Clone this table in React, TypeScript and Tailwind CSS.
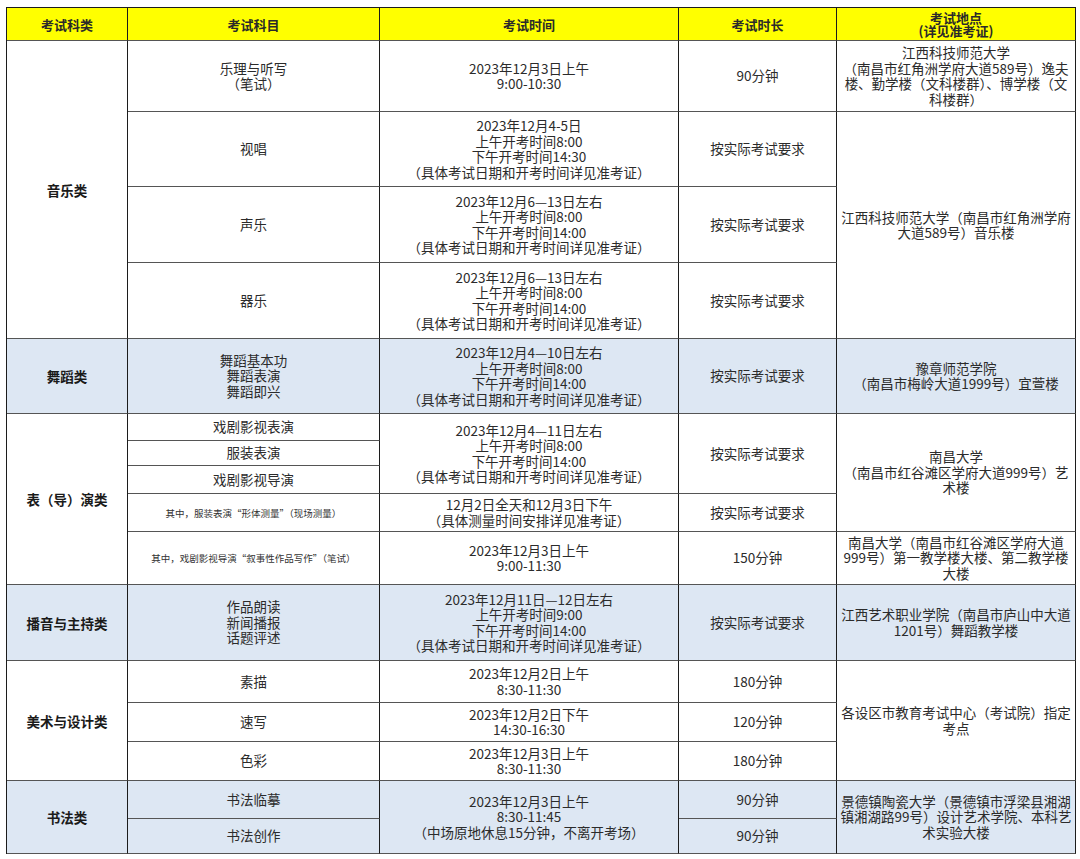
import React from 'react'

type Cell = {
    pos: string
    lines: string[]
    kind?: 'head' | 'cat' | 'small'
    shade?: boolean
}

const WAIT = '按实际考试要求'
const NOTE = '（具体考试日期和开考时间详见准考证）'

const cells: Cell[] = [
    // header
    { pos: 'col-start-1 row-start-1', lines: ['考试科类'], kind: 'head' },
    { pos: 'col-start-2 row-start-1', lines: ['考试科目'], kind: 'head' },
    { pos: 'col-start-3 row-start-1', lines: ['考试时间'], kind: 'head' },
    { pos: 'col-start-4 row-start-1', lines: ['考试时长'], kind: 'head' },
    { pos: 'col-start-5 row-start-1', lines: ['考试地点', '(详见准考证)'], kind: 'head' },

    // 音乐类
    { pos: 'col-start-1 row-start-2 row-span-4', lines: ['音乐类'], kind: 'cat' },
    { pos: 'col-start-2 row-start-2', lines: ['乐理与听写', '（笔试）'] },
    { pos: 'col-start-3 row-start-2', lines: ['2023年12月3日上午', '9:00-10:30'] },
    { pos: 'col-start-4 row-start-2', lines: ['90分钟'] },
    { pos: 'col-start-5 row-start-2', lines: ['江西科技师范大学', '（南昌市红角洲学府大道589号）逸夫', '楼、勤学楼（文科楼群）、博学楼（文', '科楼群）'] },
    { pos: 'col-start-2 row-start-3', lines: ['视唱'] },
    { pos: 'col-start-3 row-start-3', lines: ['2023年12月4-5日', '上午开考时间8:00', '下午开考时间14:30', NOTE] },
    { pos: 'col-start-4 row-start-3', lines: [WAIT] },
    { pos: 'col-start-5 row-start-3 row-span-3', lines: ['江西科技师范大学（南昌市红角洲学府', '大道589号）音乐楼'] },
    { pos: 'col-start-2 row-start-4', lines: ['声乐'] },
    { pos: 'col-start-3 row-start-4', lines: ['2023年12月6—13日左右', '上午开考时间8:00', '下午开考时间14:00', NOTE] },
    { pos: 'col-start-4 row-start-4', lines: [WAIT] },
    { pos: 'col-start-2 row-start-5', lines: ['器乐'] },
    { pos: 'col-start-3 row-start-5', lines: ['2023年12月6—13日左右', '上午开考时间8:00', '下午开考时间14:00', NOTE] },
    { pos: 'col-start-4 row-start-5', lines: [WAIT] },

    // 舞蹈类
    { pos: 'col-start-1 row-start-6', lines: ['舞蹈类'], kind: 'cat', shade: true },
    { pos: 'col-start-2 row-start-6', lines: ['舞蹈基本功', '舞蹈表演', '舞蹈即兴'], shade: true },
    { pos: 'col-start-3 row-start-6', lines: ['2023年12月4—10日左右', '上午开考时间8:00', '下午开考时间14:00', NOTE], shade: true },
    { pos: 'col-start-4 row-start-6', lines: [WAIT], shade: true },
    { pos: 'col-start-5 row-start-6', lines: ['豫章师范学院', '（南昌市梅岭大道1999号）宜萱楼'], shade: true },

    // 表（导）演类
    { pos: 'col-start-1 row-start-7 row-span-5', lines: ['表（导）演类'], kind: 'cat' },
    { pos: 'col-start-2 row-start-7', lines: ['戏剧影视表演'] },
    { pos: 'col-start-2 row-start-8', lines: ['服装表演'] },
    { pos: 'col-start-2 row-start-9', lines: ['戏剧影视导演'] },
    { pos: 'col-start-3 row-start-7 row-span-3', lines: ['2023年12月4—11日左右', '上午开考时间8:00', '下午开考时间14:00', NOTE] },
    { pos: 'col-start-4 row-start-7 row-span-3', lines: [WAIT] },
    { pos: 'col-start-5 row-start-7 row-span-4', lines: ['南昌大学', '（南昌市红谷滩区学府大道999号）艺', '术楼'] },
    { pos: 'col-start-2 row-start-10', lines: ['其中，服装表演“形体测量”（现场测量）'], kind: 'small' },
    { pos: 'col-start-3 row-start-10', lines: ['12月2日全天和12月3日下午', '（具体测量时间安排详见准考证）'] },
    { pos: 'col-start-4 row-start-10', lines: [WAIT] },
    { pos: 'col-start-2 row-start-11', lines: ['其中，戏剧影视导演“叙事性作品写作”（笔试）'], kind: 'small' },
    { pos: 'col-start-3 row-start-11', lines: ['2023年12月3日上午', '9:00-11:30'] },
    { pos: 'col-start-4 row-start-11', lines: ['150分钟'] },
    { pos: 'col-start-5 row-start-11', lines: ['南昌大学（南昌市红谷滩区学府大道', '999号）第一教学楼大楼、第二教学楼', '大楼'] },

    // 播音与主持类
    { pos: 'col-start-1 row-start-12', lines: ['播音与主持类'], kind: 'cat', shade: true },
    { pos: 'col-start-2 row-start-12', lines: ['作品朗读', '新闻播报', '话题评述'], shade: true },
    { pos: 'col-start-3 row-start-12', lines: ['2023年12月11日—12日左右', '上午开考时间9:00', '下午开考时间14:00', NOTE], shade: true },
    { pos: 'col-start-4 row-start-12', lines: [WAIT], shade: true },
    { pos: 'col-start-5 row-start-12', lines: ['江西艺术职业学院（南昌市庐山中大道', '1201号）舞蹈教学楼'], shade: true },

    // 美术与设计类
    { pos: 'col-start-1 row-start-13 row-span-3', lines: ['美术与设计类'], kind: 'cat' },
    { pos: 'col-start-2 row-start-13', lines: ['素描'] },
    { pos: 'col-start-3 row-start-13', lines: ['2023年12月2日上午', '8:30-11:30'] },
    { pos: 'col-start-4 row-start-13', lines: ['180分钟'] },
    { pos: 'col-start-2 row-start-14', lines: ['速写'] },
    { pos: 'col-start-3 row-start-14', lines: ['2023年12月2日下午', '14:30-16:30'] },
    { pos: 'col-start-4 row-start-14', lines: ['120分钟'] },
    { pos: 'col-start-2 row-start-15', lines: ['色彩'] },
    { pos: 'col-start-3 row-start-15', lines: ['2023年12月3日上午', '8:30-11:30'] },
    { pos: 'col-start-4 row-start-15', lines: ['180分钟'] },
    { pos: 'col-start-5 row-start-13 row-span-3', lines: ['各设区市教育考试中心（考试院）指定', '考点'] },

    // 书法类
    { pos: 'col-start-1 row-start-16 row-span-2', lines: ['书法类'], kind: 'cat', shade: true },
    { pos: 'col-start-2 row-start-16', lines: ['书法临摹'], shade: true },
    { pos: 'col-start-2 row-start-17', lines: ['书法创作'], shade: true },
    { pos: 'col-start-3 row-start-16 row-span-2', lines: ['2023年12月3日上午', '8:30-11:45', '（中场原地休息15分钟，不离开考场）'], shade: true },
    { pos: 'col-start-4 row-start-16', lines: ['90分钟'], shade: true },
    { pos: 'col-start-4 row-start-17', lines: ['90分钟'], shade: true },
    { pos: 'col-start-5 row-start-16 row-span-2', lines: ['景德镇陶瓷大学（景德镇市浮梁县湘湖', '镇湘湖路99号）设计艺术学院、本科艺', '术实验大楼'], shade: true },
]

function TableCell({ cell }: { cell: Cell }) {
    const bg = cell.kind === 'head' ? 'bg-[#ffff00]' : cell.shade ? 'bg-[#dde7f3]' : 'bg-white'
    const text =
        cell.kind === 'head'
            ? 'text-[13px] font-bold leading-[13px] text-[#2a2a2a]'
            : cell.kind === 'cat'
              ? 'text-[13.5px] font-bold leading-[16px] text-[#1a1a1a]'
              : cell.kind === 'small'
                ? 'text-[9.5px] leading-[12px] text-[#333]'
                : 'text-[13.5px] leading-[15.5px] text-[#2b2b2b]'

    return (
        <div
            className={`${cell.pos} ${bg} ${text} flex flex-col items-center justify-center border-r border-b border-r-[#1c1c1c] border-b-[#555] text-center overflow-hidden`}
        >
            {cell.lines.map((line, i) => (
                <div key={i} className="whitespace-nowrap">
                    {line}
                </div>
            ))}
        </div>
    )
}

export default function App() {
    return (
        <div className="w-[1080px] h-[859px] bg-white overflow-hidden font-['Noto_Sans_CJK_SC','Noto_Sans',sans-serif]">
            <div className="pt-[7px] pl-[6px]">
                <div className="grid w-max grid-cols-[121px_252px_299px_158px_239px] grid-rows-[33px_71px_75px_76px_76px_75px_27px_25px_28px_38px_53px_76px_42px_39px_39px_38px_35px] border-t border-l border-t-[#1c1c1c] border-l-[#1c1c1c]">
                    {cells.map((cell, i) => (
                        <TableCell key={i} cell={cell} />
                    ))}
                </div>
            </div>
        </div>
    )
}
